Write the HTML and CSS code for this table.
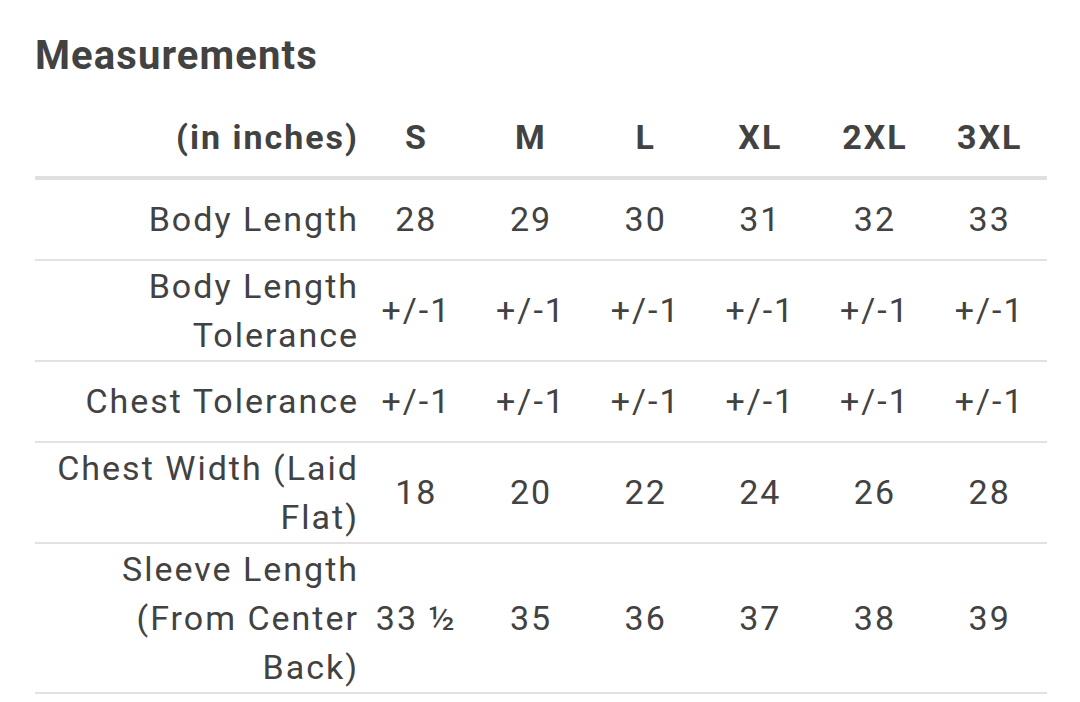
FILE: index.html
```html
<!DOCTYPE html>
<html lang="en">
<head>
<meta charset="utf-8">
<title>Measurements</title>
<link rel="stylesheet" href="styles.css">
</head>
<body>
<main class="page">
  <h2 class="title">Measurements</h2>
  <table class="size-table">
    <colgroup>
      <col class="col-label">
      <col class="col-size"><col class="col-size"><col class="col-size">
      <col class="col-size"><col class="col-size"><col class="col-size">
    </colgroup>
    <thead>
      <tr>
        <th class="label">(in inches)</th>
        <th>S</th><th>M</th><th>L</th><th>XL</th><th>2XL</th><th>3XL</th>
      </tr>
    </thead>
    <tbody>
      <tr>
        <th class="label">Body Length</th>
        <td>28</td><td>29</td><td>30</td><td>31</td><td>32</td><td>33</td>
      </tr>
      <tr>
        <th class="label">Body Length Tolerance</th>
        <td>+/-1</td><td>+/-1</td><td>+/-1</td><td>+/-1</td><td>+/-1</td><td>+/-1</td>
      </tr>
      <tr>
        <th class="label">Chest Tolerance</th>
        <td>+/-1</td><td>+/-1</td><td>+/-1</td><td>+/-1</td><td>+/-1</td><td>+/-1</td>
      </tr>
      <tr>
        <th class="label">Chest Width (Laid Flat)</th>
        <td>18</td><td>20</td><td>22</td><td>24</td><td>26</td><td>28</td>
      </tr>
      <tr>
        <th class="label">Sleeve Length (From Center Back)</th>
        <td>33 ½</td><td>35</td><td>36</td><td>37</td><td>38</td><td>39</td>
      </tr>
    </tbody>
  </table>
</main>
</body>
</html>
```
FILE: styles.css
```css
html, body {
  margin: 0;
  padding: 0;
  background: #ffffff;
}

body {
  font-family: Roboto, "Liberation Sans", sans-serif;
  color: #424242;
}

.page {
  padding: 32px 33px 0 35px;
}

.title {
  margin: 0 0 19px 0;
  font-size: 40px;
  line-height: 47px;
  font-weight: 700;
  letter-spacing: 1.1px;
  color: #424242;
}

.size-table {
  width: 1012px;
  table-layout: fixed;
  border-collapse: collapse;
  border-spacing: 0;
  font-size: 34px;
  letter-spacing: 2px;
}

.col-label {
  width: 324px;
}

.col-size {
  width: 114.66px;
}

.size-table th,
.size-table td {
  padding: 15px 0;
  line-height: 49px;
  text-align: center;
  vertical-align: middle;
}

.size-table thead th {
  font-weight: 700;
  padding: 14.5px 0;
  border-bottom: 4px solid #e0e0e3;
}

.size-table tbody th,
.size-table tbody td {
  font-weight: 400;
  border-bottom: 2px solid #e2e2e2;
}

.size-table tbody .label {
  text-align: right;
  padding: 0.5px 0;
}

.size-table thead .label {
  text-align: right;
}
```
